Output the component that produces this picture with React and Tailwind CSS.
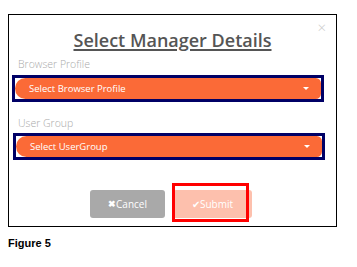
import React from 'react';

function SelectBox({ label, className }) {
  return (
    <div className={`w-[312px] h-[27px] border-[3px] border-[#000066] bg-white ${className}`}>
      <div className="h-full flex items-center justify-between bg-[#fb6a37] rounded-l-[12px] rounded-r-[6px] pl-[14px] pr-[12px]">
        <span className="text-[9.5px] text-white leading-none">{label}</span>
        <span className="w-0 h-0 border-l-[3px] border-r-[3px] border-t-[3px] border-l-transparent border-r-transparent border-t-white" />
      </div>
    </div>
  );
}

export default function App() {
  return (
    <div className="w-[357px] h-[267px] bg-white font-['Open_Sans',sans-serif] pt-[14px] pl-[8px]">
      <div className="relative w-[329px] h-[213px] border border-black">
        <span className="absolute right-[10px] top-[5px] text-[15px] leading-none text-[#cccccc] font-light">×</span>
        <h1 className="mt-[14px] text-center text-[18px] font-semibold leading-[22px] text-[#555555] underline underline-offset-[2px] decoration-[1.5px]">
          Select Manager Details
        </h1>
        <div className="mt-[6px] pl-[9px] text-[10.5px] leading-[14px] text-[#aaaaaa] font-light">Browser Profile</div>
        <SelectBox label="Select Browser Profile" className="mt-[4px] ml-[3px]" />
        <div className="mt-[14px] pl-[9px] text-[10.5px] leading-[14px] text-[#aaaaaa] font-light">User Group</div>
        <SelectBox label="Select UserGroup" className="mt-[3px] ml-[4px]" />
        <div className="mt-[30px] flex pl-[81px] gap-[8px] items-center">
          <button className="w-[75px] h-[28px] rounded-[3px] bg-[#a9a9a9] text-white text-[10px] flex items-center justify-center">
            <span className="font-bold text-[9px]">✖</span>Cancel
          </button>
          <div className="relative">
            <button className="w-[79px] h-[28px] rounded-[3px] bg-[#fdc0ad] text-white text-[10px] flex items-center justify-center">
              <span className="text-[10px]">✔</span>Submit
            </button>
            <div className="absolute left-[-1px] top-[-7px] w-[77px] h-[39px] border-[3px] border-[#ff0000]" />
          </div>
        </div>
      </div>
      <div className="mt-[9px] font-['Liberation_Sans',sans-serif] font-bold text-[11px] leading-[14px] text-black">Figure 5</div>
    </div>
  );
}
